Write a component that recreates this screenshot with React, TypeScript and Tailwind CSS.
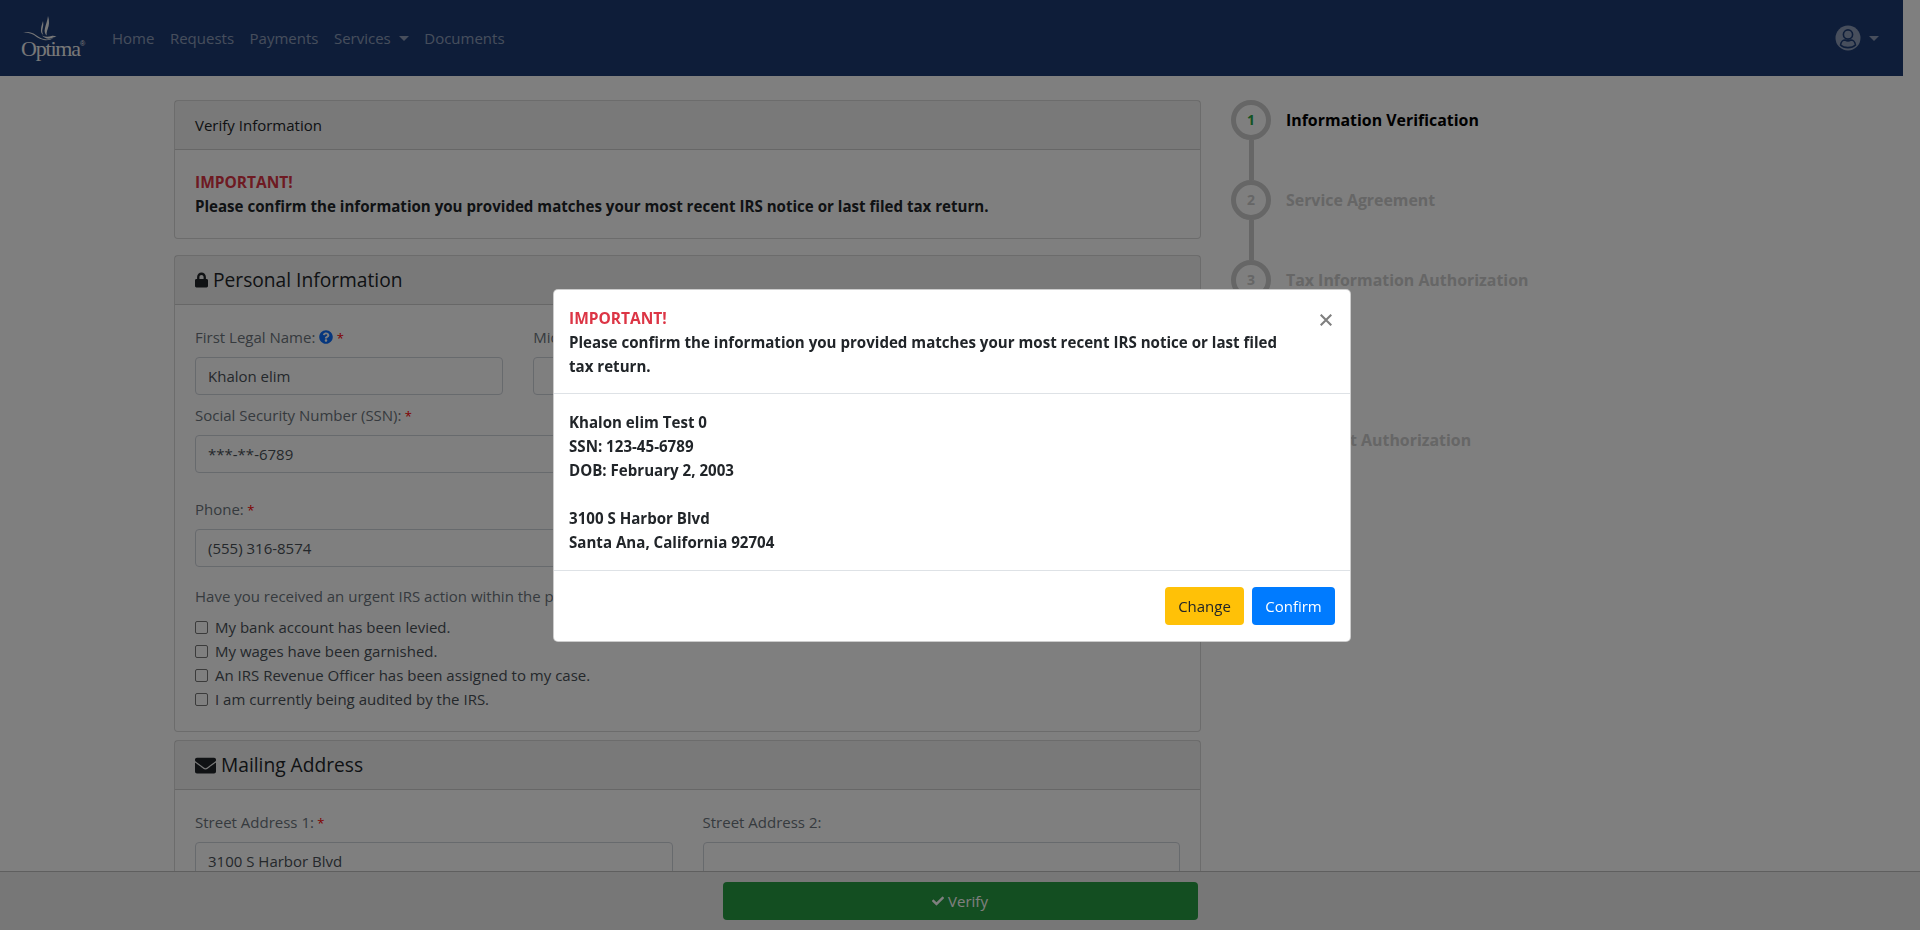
import { FaCheck, FaEnvelope, FaLock, FaQuestionCircle } from "react-icons/fa";

const navLinks = ["Home", "Requests", "Payments"];

const steps = [
  { n: 1, label: "Information Verification", active: true },
  { n: 2, label: "Service Agreement" },
  { n: 3, label: "Tax Information Authorization" },
  { n: 4, label: "Review" },
  { n: 5, label: "Payment Authorization" },
];

const irsActions = [
  "My bank account has been levied.",
  "My wages have been garnished.",
  "An IRS Revenue Officer has been assigned to my case.",
  "I am currently being audited by the IRS.",
];

function Caret() {
  return <span className="inline-block h-0 w-0 border-x-[5px] border-t-[5px] border-x-transparent border-t-current" />;
}

function Logo() {
  return (
    <div className="relative h-[50px] w-[66px] shrink-0 text-[#f0f0f0]">
      <svg viewBox="0 0 66 36" className="absolute left-0 top-0 h-[36px] w-[66px]" fill="currentColor">
        <path d="M27 3c1.600 5 1.300 9-.3 13-.8 2.200-1.300 4-1 6.500-1.800-1.500-2.500-4-1.800-7 .7-3.600 2.600-7.500 3.100-12.500Z" />
        <path d="M22 8c.6 3 .2 5.500-.5 8-.5 2-.3 4 .9 6-1.900-1-2.700-3.300-2.400-6 .2-2.700 1.300-5.300 2-8Z" />
        <path d="M21 22.500c3 1.500 6.500 1.500 9.500 .5 1.700-.4 3.400 0 5 1-2 0-3.300.3-4.500 1-3.500 1.500-7.500 .5-10-2.500Z" />
        <path d="M2 20c3.500-1.600 7-1.300 10.500.6 3.500 2.200 7 5.200 11.500 5.700 3 .3 6-.2 8.500-1.300-2.500 1.700-5.500 2.500-8.500 2.200-5-.4-8.500-3.400-12-5.600C8.800 20.100 5.500 19.500 2 20Z" />
      </svg>
      <span className="absolute left-0 top-[23px] text-[22px] leading-[26px] tracking-[-1.200px] font-['Liberation_Serif',serif]">
        Optima
      </span>
      <span className="absolute left-[59px] top-[27px] text-[7px] leading-[8px] font-['Liberation_Sans',sans-serif]">®</span>
    </div>
  );
}

function UserIcon() {
  return (
    <svg viewBox="0 0 26 26" className="h-[26px] w-[26px]">
      <circle cx="13" cy="13" r="12.500" fill="currentColor" />
      <circle cx="13" cy="9.500" r="4.600" fill="none" stroke="#1c3a73" strokeWidth="1.600" />
      <path d="M5.500 20c.5-3.500 3-5 4.500-5 1.800 1 4.200 1 6 0 1.500 0 4 1.500 4.500 5-3.500 3.500-11.500 3.500-15 0Z" fill="none" stroke="#1c3a73" strokeWidth="1.600" />
    </svg>
  );
}

function CloseIcon() {
  return (
    <svg viewBox="0 0 12 12" className="h-3 w-3" fill="none" stroke="#7f7f7f" strokeWidth="2.100">
      <path d="M.7.7l10.600 10.600M11.300.7.7 11.300" />
    </svg>
  );
}

function Required() {
  return <span className="text-[13px] text-[#ff0000]"> *</span>;
}

function Field({ label, value, required, className }: { label: React.ReactNode; value?: string; required?: boolean; className?: string }) {
  return (
    <div className={className}>
      <label className="mb-2 block h-6 leading-6 text-[#6c757d]">
        {label}
        {required && <Required />}
      </label>
      <div className="flex h-[38px] items-center rounded border border-[#ced4da] bg-white px-3 text-[#495057]">{value}</div>
    </div>
  );
}

function SectionCard({ icon, title, children }: { icon: React.ReactNode; title: string; children: React.ReactNode }) {
  return (
    <div className="rounded border border-black/15 bg-white">
      <div className="flex h-[49px] items-center gap-[5px] border-b border-black/15 bg-black/5 px-5 text-[19.200px] text-[#212529]">
        {icon}
        {title}
      </div>
      <div className="p-5">{children}</div>
    </div>
  );
}

export default function App() {
  return (
    <div className="relative flex h-[930px] w-full flex-col overflow-hidden bg-white text-[15px] text-[#212529] font-['Open_Sans',sans-serif]">
      <nav className="flex h-[76px] w-[1903px] shrink-0 items-center bg-[#1c3a73] pl-[21px] pr-[24px] text-white/50">
        <Logo />
        <ul className="ml-[25px] flex items-center gap-[15.500px]">
          {navLinks.map((link) => (
            <li key={link}>{link}</li>
          ))}
          <li className="flex items-center gap-2">
            Services
            <Caret />
          </li>
          <li>Documents</li>
        </ul>
        <div className="ml-auto flex items-center gap-2">
          <UserIcon />
          <Caret />
        </div>
      </nav>

      <main className="flex flex-1 gap-[30px] overflow-hidden pl-[174px] pt-6">
        <div className="flex w-[1027px] shrink-0 flex-col">
          <div className="rounded border border-black/15 bg-white">
            <div className="flex h-[49px] items-center border-b border-black/15 bg-black/5 px-5">Verify Information</div>
            <div className="h-[88px] p-5 text-[15.100px] leading-6 font-bold">
              <div className="text-[15.500px] text-[#dc3545]">IMPORTANT!</div>
              <div>Please confirm the information you provided matches your most recent IRS notice or last filed tax return.</div>
            </div>
          </div>

          <div className="mt-4">
            <SectionCard icon={<FaLock className="h-4 w-[13px]" />} title="Personal Information">
              <div className="grid grid-cols-3 gap-x-[30px]">
                <Field
                  label={
                    <>
                      First Legal Name: <FaQuestionCircle className="inline h-[14px] w-[14px] align-[-1px] text-[#0d6efd]" />
                    </>
                  }
                  value="Khalon elim"
                  required
                />
                <Field label="Middle Name:" />
                <Field label="Last Legal Name:" value="Test 0" required />
              </div>
              <div className="mt-2 grid grid-cols-2 gap-x-[30px]">
                <Field label="Social Security Number (SSN):" value="***-**-6789" required />
                <Field label="Date of Birth:" value="02/02/2003" required />
              </div>
              <div className="mt-6 grid grid-cols-2 gap-x-[30px]">
                <Field label="Phone:" value="(555) 316-8574" required />
                <Field label="Email:" />
              </div>
              <p className="mt-[17px] leading-6 text-[#6c757d]">Have you received an urgent IRS action within the past 30 days?</p>
              <ul className="mt-[7px]">
                {irsActions.map((item) => (
                  <li key={item} className="flex h-6 items-center gap-[7px] text-[#495057]">
                    <span className="h-[13px] w-[13px] rounded-[2px] border border-[#767676] bg-white" />
                    {item}
                  </li>
                ))}
              </ul>
            </SectionCard>
          </div>

          <div className="mt-2">
            <SectionCard icon={<FaEnvelope className="h-[21px] w-[21px]" />} title="Mailing Address">
              <div className="grid grid-cols-2 gap-x-[30px]">
                <Field label="Street Address 1:" value="3100 S Harbor Blvd" required />
                <Field label="Street Address 2:" />
              </div>
            </SectionCard>
          </div>
        </div>

        <ol className="flex flex-col">
          {steps.map((step, i) => (
            <li key={step.n} className="flex">
              <div className="flex w-10 flex-col items-center">
                <span
                  className={`flex h-10 w-10 items-center justify-center rounded-full border-[5px] border-[#cccccc] text-sm font-bold ${
                    step.active ? "text-[#28a745]" : "text-[#cccccc]"
                  }`}
                >
                  {step.n}
                </span>
                {i < steps.length - 1 && <span className="h-10 w-[5px] bg-[#cccccc]" />}
              </div>
              <span className={`ml-[15px] h-10 text-[15.900px] leading-10 font-bold ${step.active ? "text-black" : "text-[#cccccc]"}`}>{step.label}</span>
            </li>
          ))}
        </ol>
      </main>

      <footer className="flex h-[59px] shrink-0 justify-center border-t border-black/20 bg-[#eeeeee] pt-[10px]">
        <div className="flex h-[38px] w-[475px] items-center justify-center gap-1 rounded bg-[#279c42] text-white">
          <FaCheck className="h-3 w-3" />
          Verify
        </div>
      </footer>

      <div className="fixed inset-0 z-40 bg-black/50" />
      <div className="fixed inset-y-0 left-0 z-50 flex w-[1904px] items-start justify-center pt-[289px]">
        <div className="w-[798px] rounded-[5px] border border-black/20 bg-white">
          <div className="relative h-[104px] border-b border-[#dee2e6] px-[15px] py-4 text-[15.100px] leading-6 font-bold">
            <div className="text-[15.500px] text-[#dc3545]">IMPORTANT!</div>
            <div>
              Please confirm the information you provided matches your most recent IRS notice or last filed
              <br />
              tax return.
            </div>
            <span className="absolute right-[18px] top-[24px]">
              <CloseIcon />
            </span>
          </div>
          <div className="border-b border-[#dee2e6] px-[15px] py-4 text-[15.100px] leading-6 font-bold">
            <div>Khalon elim Test 0</div>
            <div>SSN: 123-45-6789</div>
            <div>DOB: February 2, 2003</div>
            <div className="h-6" />
            <div>3100 S Harbor Blvd</div>
            <div>Santa Ana, California 92704</div>
          </div>
          <div className="flex justify-end gap-2 py-4 pl-4 pr-[15px]">
            <button className="h-[38px] w-[79px] rounded bg-[#ffc107]">Change</button>
            <button className="h-[38px] w-[83px] rounded bg-[#007bff] text-white">Confirm</button>
          </div>
        </div>
      </div>
    </div>
  );
}
